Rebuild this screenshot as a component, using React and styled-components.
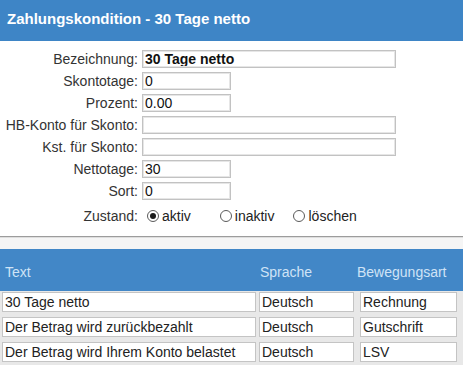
import React from "react";
import styled, { createGlobalStyle } from "styled-components";

const Global = createGlobalStyle`
  html, body { margin: 0; padding: 0; background: #ffffff; }
  body { font-family: "Liberation Sans", Arial, sans-serif; font-size: 14px; color: #2b2b2b; }
`;

const Page = styled.div`
  width: 463px;
  height: 365px;
  overflow: hidden;
  background: #ffffff;
`;

const TitleBar = styled.div`
  height: 41px;
  background: #3e85c6;
  color: #ffffff;
  font-weight: bold;
  font-size: 15px;
  display: flex;
  align-items: center;
  padding-left: 7px;
  padding-bottom: 4px;
  box-sizing: border-box;
`;

const Form = styled.div`
  display: grid;
  grid-template-columns: 138px 1fr;
  column-gap: 4px;
  row-gap: 4px;
  padding-top: 9px;
  align-items: center;
`;

const Label = styled.div`
  text-align: right;
  color: #333333;
  line-height: 18px;
  white-space: nowrap;
`;

const Field = styled.input`
  box-sizing: border-box;
  width: ${(p) => p.$w}px;
  height: 18px;
  border: 1px solid #c2c2c2;
  outline: 1px solid #e6e6e6;
  outline-offset: -2px;
  padding: 0 2px;
  font-family: "Liberation Sans", Arial, sans-serif;
  font-size: 14px;
  font-weight: ${(p) => (p.$bold ? "bold" : "normal")};
  color: #111111;
  background: #ffffff;
  margin: 0;
`;

const RadioRow = styled.div`
  display: flex;
  align-items: center;
  height: 20px;
  margin-top: 2px;
`;

const RadioOption = styled.label`
  display: flex;
  align-items: center;
  margin-left: ${(p) => p.$ml}px;
  color: #222222;
  gap: 3px;
`;

const Circle = styled.span`
  box-sizing: border-box;
  width: 12px;
  height: 12px;
  border-radius: 50%;
  border: 1px solid #5a5a5a;
  background: #ffffff;
  display: inline-flex;
  align-items: center;
  justify-content: center;
  &::after {
    content: "";
    width: 6px;
    height: 6px;
    border-radius: 50%;
    background: ${(p) => (p.$on ? "#1a1a1a" : "transparent")};
  }
`;

const Separator = styled.div`
  margin-top: 10px;
  border-top: 1px solid #9c9c9c;
  border-bottom: 1px solid #dedede;
`;

const Gap = styled.div`
  height: 11px;
  background: #f5f5f5;
`;

const Table = styled.div`
  background: #e8e8e8;
`;

const HeadRow = styled.div`
  display: grid;
  grid-template-columns: 256px 98px 1fr;
  height: 42px;
  background: #4287c7;
  align-items: center;
`;

const HeadCell = styled.div`
  color: #cfe3f6;
  padding-left: ${(p) => p.$pl}px;
  padding-top: 4px;
`;

const Body = styled.div`
  display: grid;
  row-gap: 5px;
  padding-top: 1px;
  padding-bottom: 6px;
`;

const BodyRow = styled.div`
  display: grid;
  grid-template-columns: 256px 98px 1fr;
`;

const CellInput = styled.input`
  box-sizing: border-box;
  margin: 0 0 0 ${(p) => p.$ml}px;
  width: ${(p) => p.$w}px;
  height: 20px;
  border: 1px solid #c4c4c4;
  padding: 0 2px;
  font-family: "Liberation Sans", Arial, sans-serif;
  font-size: 14px;
  color: #222222;
  background: #ffffff;
`;

const rows = [
  ["30 Tage netto", "Deutsch", "Rechnung"],
  ["Der Betrag wird zurückbezahlt", "Deutsch", "Gutschrift"],
  ["Der Betrag wird Ihrem Konto belastet", "Deutsch", "LSV"],
];

export default function App() {
  return (
    <Page>
      <Global />
      <TitleBar>Zahlungskondition - 30 Tage netto</TitleBar>
      <Form>
        <Label>Bezeichnung:</Label>
        <Field $w={254} $bold defaultValue="30 Tage netto" />
        <Label>Skontotage:</Label>
        <Field $w={89} defaultValue="0" />
        <Label>Prozent:</Label>
        <Field $w={89} defaultValue="0.00" />
        <Label>HB-Konto für Skonto:</Label>
        <Field $w={254} defaultValue="" />
        <Label>Kst. für Skonto:</Label>
        <Field $w={254} defaultValue="" />
        <Label>Nettotage:</Label>
        <Field $w={89} defaultValue="30" />
        <Label>Sort:</Label>
        <Field $w={89} defaultValue="0" />
        <Label style={{ marginTop: 2 }}>Zustand:</Label>
        <RadioRow>
          <RadioOption $ml={5}>
            <Circle $on />
            aktiv
          </RadioOption>
          <RadioOption $ml={29}>
            <Circle />
            inaktiv
          </RadioOption>
          <RadioOption $ml={19}>
            <Circle />
            löschen
          </RadioOption>
        </RadioRow>
      </Form>
      <Separator />
      <Gap />
      <Table>
        <HeadRow>
          <HeadCell $pl={5}>Text</HeadCell>
          <HeadCell $pl={4}>Sprache</HeadCell>
          <HeadCell $pl={3}>Bewegungsart</HeadCell>
        </HeadRow>
        <Body>
          {rows.map((r, i) => (
            <BodyRow key={i}>
              <CellInput $ml={2} $w={254} defaultValue={r[0]} />
              <CellInput $ml={3} $w={95} defaultValue={r[1]} />
              <CellInput $ml={6} $w={97} defaultValue={r[2]} />
            </BodyRow>
          ))}
        </Body>
      </Table>
    </Page>
  );
}
